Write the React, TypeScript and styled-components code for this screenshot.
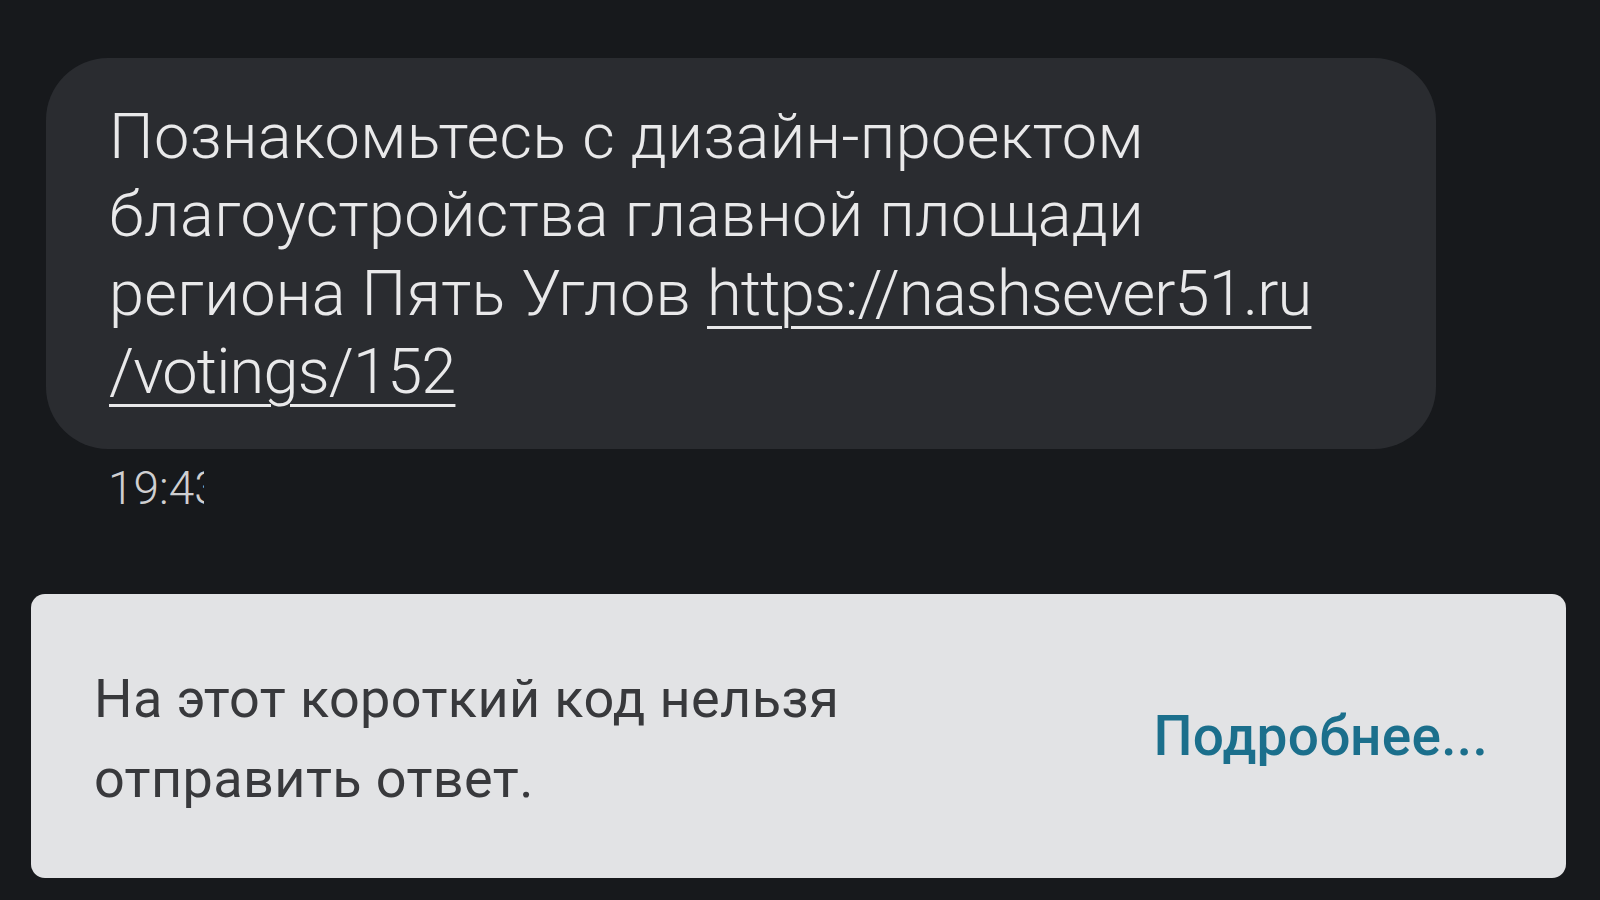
import React from "react";
import styled, { createGlobalStyle } from "styled-components";

const Global = createGlobalStyle`
  html, body {
    margin: 0;
    padding: 0;
    background: #17191c;
  }
  body {
    font-family: Roboto, "Noto Sans", "Liberation Sans", sans-serif;
  }
`;

const Screen = styled.div`
  width: 1600px;
  height: 900px;
  box-sizing: border-box;
  background: #17191c;
  display: flex;
  flex-direction: column;
  padding: 58px 34px 0 31px;
  overflow: hidden;
`;

const Bubble = styled.div`
  margin-left: 15px;
  width: 1390px;
  height: 391px;
  flex-shrink: 0;
  box-sizing: border-box;
  background: #2a2c30;
  border-radius: 62px;
  padding: 40px 0 0 63px;
`;

const MessageText = styled.p`
  margin: 0;
  color: #e9e9ea;
  font-size: 63px;
  font-weight: 300;
  line-height: 78.4px;
  letter-spacing: 0.4px;
  white-space: nowrap;
`;

const Link = styled.span`
  letter-spacing: -0.8px;
  text-decoration: underline;
  text-decoration-thickness: 3px;
  text-underline-offset: 11px;
`;

const TimeRow = styled.div`
  margin: 9px 0 0 77px;
  height: 60px;
  flex-shrink: 0;
  display: flex;
  align-items: center;
  color: #cfcfd1;
  font-size: 46px;
  font-weight: 300;
  white-space: nowrap;
`;

const Clip = styled.span`
  display: inline-block;
  width: 10px;
  overflow: hidden;
  vertical-align: bottom;
`;

const Notice = styled.div`
  margin-top: 76px;
  height: 284px;
  flex-shrink: 0;
  box-sizing: border-box;
  background: #e2e3e5;
  border-radius: 14px;
  display: flex;
  align-items: center;
  justify-content: space-between;
  padding: 0 78px 0 63px;
`;

const NoticeText = styled.p`
  margin: 6px 0 0;
  color: #38393c;
  font-size: 54px;
  font-weight: 400;
  line-height: 80px;
  letter-spacing: 0.4px;
  white-space: nowrap;
`;

const MoreButton = styled.span`
  color: #1b6f8c;
  font-size: 55px;
  font-weight: 500;
  letter-spacing: 0.3px;
  white-space: nowrap;
`;

export default function App() {
  return (
    <>
      <Global />
      <Screen>
        <Bubble>
          <MessageText>
            Познакомьтесь с дизайн-проектом
            <br />
            благоустройства главной площади
            <br />
            региона Пять Углов <Link>https://nashsever51.ru</Link>
            <br />
            <Link>/votings/152</Link>
          </MessageText>
        </Bubble>
        <TimeRow>
          19:4<Clip>3</Clip>
        </TimeRow>
        <Notice>
          <NoticeText>
            На этот короткий код нельзя
            <br />
            отправить ответ.
          </NoticeText>
          <MoreButton>Подробнее...</MoreButton>
        </Notice>
      </Screen>
    </>
  );
}
